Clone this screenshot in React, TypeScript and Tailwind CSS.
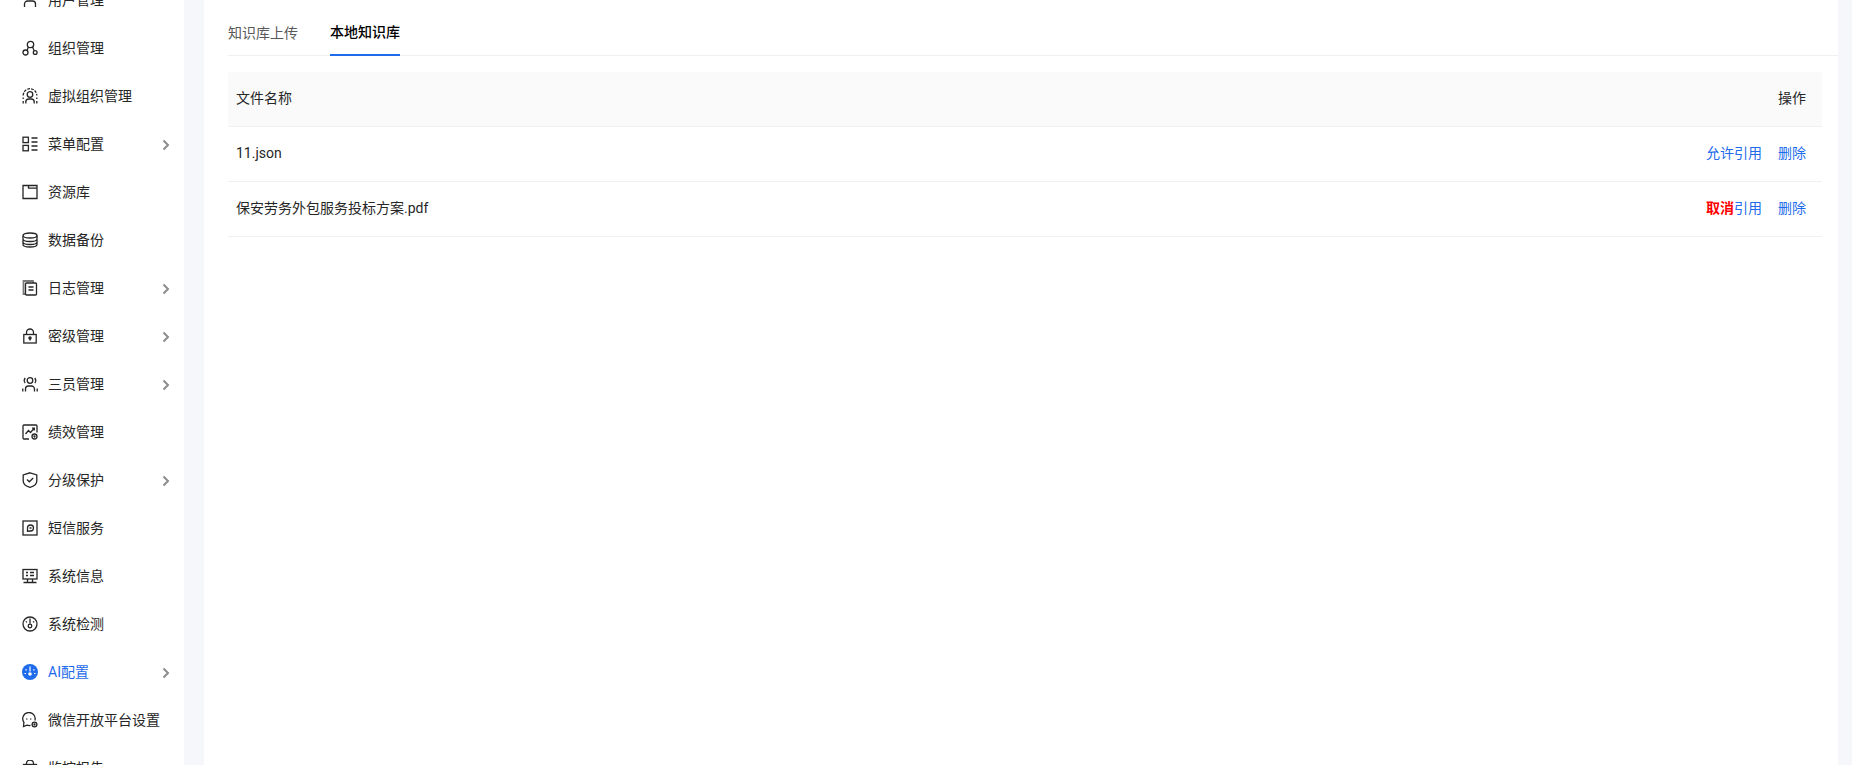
import React from "react";

const S = ({ children }: { children: React.ReactNode }) => (
  <svg width="16" height="16" viewBox="0 0 16 16" fill="none" stroke="currentColor" strokeWidth="1.3" className="shrink-0">
    {children}
  </svg>
);

const icons: Record<string, React.ReactNode> = {
  user: <S><circle cx="8" cy="4" r="3" /><path d="M2.5 15v-3a3 3 0 0 1 3-3h5a3 3 0 0 1 3 3v3" /></S>,
  org: <S><circle cx="8.5" cy="4.5" r="3.2" /><circle cx="3.5" cy="12.5" r="2.5" /><circle cx="13.2" cy="12.5" r="1.9" /><path d="M6.5 7 5 10.5M10.5 7l1.700 3.700" /></S>,
  vorg: <S><circle cx="8" cy="6.500" r="2.800" /><path d="M1.200 7.500a6.800 6.800 0 0 1 13.600 0" strokeDasharray="2.800 1.100" /><path d="M3.800 15.500v-1.500a3 3 0 0 1 3-3h2.400a3 3 0 0 1 3 3v1.500" /><path d="M1.200 9.500v1.500M14.800 9.500v1.500M1.200 13v2.500M14.800 13v2.500" /></S>,
  menu: <S><rect x="1" y="1.200" width="5.400" height="5.400" /><rect x="1" y="9.400" width="5.400" height="5.400" /><path d="M9.500 2h6M9.500 6h6M9.500 10h6M9.500 14h6" /></S>,
  folder: <S><path d="M1 1.500h14v13H1z" /><path d="M6.500 1.500v2.700H15" /></S>,
  db: <S><ellipse cx="8" cy="3.500" rx="7" ry="2.500" /><path d="M1 3.500v9c0 1.400 3.100 2.500 7 2.500s7-1.100 7-2.500v-9M1 7c0 1.400 3.100 2.500 7 2.500S15 8.400 15 7M1 10c0 1.400 3.100 2.500 7 2.500s7-1.100 7-2.500" /></S>,
  log: (
    <S>
      <path d="M3.500 14H1.500V1h9.500v2" stroke="#7a7a7a" strokeWidth="1.800" />
      <rect x="3.500" y="3" width="11" height="12" rx="1" />
      <path d="M6.500 7h5M6.500 10h5" />
    </S>
  ),
  lock: <S><rect x="1.800" y="6.500" width="12.400" height="8.500" /><path d="M4.500 6.500V4.500a3.500 3.500 0 0 1 7 0v2" /><circle cx="8" cy="10" r="1.100" fill="currentColor" /><path d="M8 10v2.500" /></S>,
  team: <S><circle cx="8" cy="4.500" r="2.800" /><path d="M3.500 15.500V13a3 3 0 0 1 3-3h3a3 3 0 0 1 3 3v2.500M3.200 2a4 4 0 0 0 0 5M12.800 2a4 4 0 0 1 0 5M.8 15.500v-3M15.200 15.500v-3" /></S>,
  perf: <S><path d="M7 15H2a1 1 0 0 1-1-1V2a1 1 0 0 1 1-1h12a1 1 0 0 1 1 1v6.500" /><path d="m3.500 10 3-3.500 2 2 3.500-4M10 4.200h2.300v2.300" /><circle cx="12.500" cy="12.500" r="2.500" /><circle cx="12.500" cy="12.500" r=".5" fill="currentColor" /></S>,
  shield: <S><path d="M8 .8 14.800 3v6c0 3-3 5.300-6.800 6.300C4.200 14.300 1.200 12 1.200 9V3z" /><path d="m5 7.500 2.300 2.300L11.200 6" /></S>,
  sms: <S><rect x="1" y="1" width="14" height="14" /><path d="M5.500 11.200V8a3 3 0 1 1 3 3zM7.500 8h2" /></S>,
  info: <S><rect x="1" y="1.500" width="14" height="9.500" /><path d="M4 4.500h2M8 4.500h4M4 7.500h2M8 7.500h4M5.500 11v3M10.500 11v3M1.500 14.500h13" /></S>,
  check: <S><circle cx="8" cy="8" r="7" /><path d="M8 2.500v5" /><circle cx="8" cy="10" r="1.800" /><path d="M3.800 5.500 5 6.300M12.200 5.500 11 6.300" /></S>,
  ai: (
    <svg width="16" height="16" viewBox="0 0 16 16" className="shrink-0">
      <circle cx="8" cy="8" r="8" fill="currentColor" />
      <path d="M8 2.500v5M3.500 5.500l1.200.8M12.500 5.500l-1.200.8M2.500 9.500h1.500M12 9.500h1.500" stroke="#fff" strokeWidth="1.200" />
      <circle cx="8" cy="10" r="1.800" fill="#fff" />
    </svg>
  ),
  wechat: <S><path d="M12.900 8.500A6.200 6.200 0 1 0 1.900 10.300L1.500 14.500 5 13.100a6.200 6.200 0 0 0 3.500.3" /><path d="M4.300 7h1M8.300 7h1" strokeWidth="1.500" /><circle cx="12.500" cy="12.500" r="2.400" /><circle cx="12.500" cy="12.500" r=".5" fill="currentColor" /></S>,
  report: <S><rect x="1.500" y="4.500" width="13" height="10.500" /><path d="M4.500 4.500v-1a3.500 3.500 0 0 1 7 0v1" /></S>,
};

const items: { icon: string; label: string; arrow?: boolean; active?: boolean }[] = [
  { icon: "user", label: "用户管理" },
  { icon: "org", label: "组织管理" },
  { icon: "vorg", label: "虚拟组织管理" },
  { icon: "menu", label: "菜单配置", arrow: true },
  { icon: "folder", label: "资源库" },
  { icon: "db", label: "数据备份" },
  { icon: "log", label: "日志管理", arrow: true },
  { icon: "lock", label: "密级管理", arrow: true },
  { icon: "team", label: "三员管理", arrow: true },
  { icon: "perf", label: "绩效管理" },
  { icon: "shield", label: "分级保护", arrow: true },
  { icon: "sms", label: "短信服务" },
  { icon: "info", label: "系统信息" },
  { icon: "check", label: "系统检测" },
  { icon: "ai", label: "AI配置", arrow: true, active: true },
  { icon: "wechat", label: "微信开放平台设置" },
  { icon: "report", label: "监控报告" },
];

const font = { fontFamily: 'Roboto, "Noto Sans CJK SC", sans-serif' };

export default function App() {
  return (
    <div className="flex h-[765px] w-[1852px] overflow-hidden bg-[#f5f7fa] text-[14px] leading-[22px] text-[#262626]" style={font}>
      <aside className="h-full w-[184px] shrink-0 overflow-hidden bg-white">
        <ul className="-mt-[24px]">
          {items.map((it) => (
            <li
              key={it.label}
              className={`flex h-[48px] items-center gap-[10px] pl-[22px] pr-[14px] ${it.active ? "text-[#1e6ceb]" : "text-[#262626]"}`}
            >
              {icons[it.icon]}
              <span className="flex-1 whitespace-nowrap">{it.label}</span>
              {it.arrow && (
                <svg width="8" height="12" viewBox="0 0 8 12" fill="none" stroke="#8c8c8c" strokeWidth="2" className="mt-[2px] shrink-0">
                  <path d="m1.500 1.500 4.500 4.500-4.500 4.500" />
                </svg>
              )}
            </li>
          ))}
        </ul>
      </aside>
      <main className="ml-[20px] mr-[14px] min-w-0 flex-1 bg-white pl-[24px]">
        <div className="flex h-[56px] gap-[32px] border-b border-[#f0f0f0]">
          <div className="flex h-[56px] w-[70px] items-center whitespace-nowrap pt-[10px] text-[#595959]">知识库上传</div>
          <div className="flex h-[56px] w-[70px] items-center whitespace-nowrap border-b-2 border-[#1e6ceb] pt-[10px] font-medium text-black">本地知识库</div>
        </div>
        <table className="mt-[16px] w-[1594px] border-collapse">
          <thead>
            <tr className="h-[54px] border-b border-[#f0f0f0] bg-[#fafafa]">
              <th className="rounded-tl-[2px] pb-[1px] pl-[8px] text-left font-normal">文件名称</th>
              <th className="rounded-tr-[2px] pb-[1px] pr-[16px] text-right font-normal">操作</th>
            </tr>
          </thead>
          <tbody>
            <tr className="h-[55px] border-b border-[#f0f0f0]">
              <td className="pb-[1px] pl-[8px]">11.json</td>
              <td className="pb-[1px] pr-[16px] text-right text-[#1e6ceb]">
                <span>允许引用</span>
                <span className="ml-[16px]">删除</span>
              </td>
            </tr>
            <tr className="h-[55px] border-b border-[#f0f0f0]">
              <td className="pb-[1px] pl-[8px]">保安劳务外包服务投标方案.pdf</td>
              <td className="pb-[1px] pr-[16px] text-right text-[#1e6ceb]">
                <span className="font-bold text-[#ff0000]">取消</span>
                <span>引用</span>
                <span className="ml-[16px]">删除</span>
              </td>
            </tr>
          </tbody>
        </table>
      </main>
    </div>
  );
}
